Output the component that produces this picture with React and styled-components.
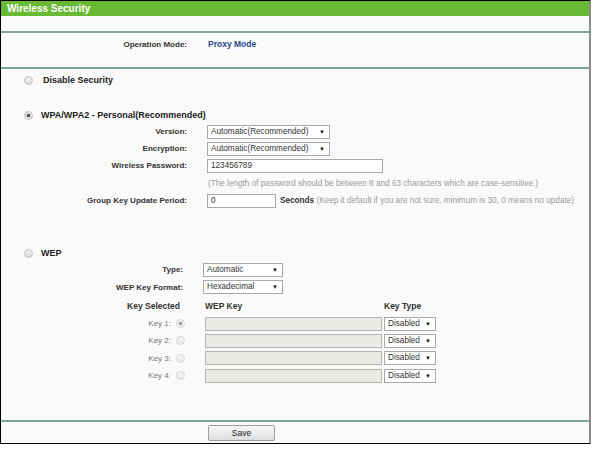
import styled, { createGlobalStyle } from "styled-components";

const GlobalStyle = createGlobalStyle`
  body {
    margin: 0;
    background: #fff;
    font-family: "Liberation Sans", Arial, sans-serif;
    color: #333;
  }
`;

const Frame = styled.div`
  width: 588px;
  border: 1px solid #000;
  border-right: 2px solid #8a8a8a;
  background: #fafafa;
`;

const Header = styled.div`
  height: 15px;
  line-height: 15px;
  padding-left: 6px;
  background: #68b934;
  color: #fff;
  font-size: 10px;
  font-weight: bold;
`;

const Spacer = styled.div`
  height: ${(p) => p.$h}px;
`;

const Divider = styled.div`
  height: 2px;
  background: #7ba690;
`;

const ModeRow = styled.div`
  height: 34px;
  padding-top: 3px;
  box-sizing: border-box;
  display: flex;
  align-items: flex-start;
  line-height: 17px;
`;

const ModeValue = styled.span`
  margin-left: 1px;
  color: #1f4a92;
  font-size: 8.5px;
  font-weight: bold;
`;

const Content = styled.div`
  display: flex;
  flex-direction: column;
  height: 351px;
`;

const RadioHeading = styled.label`
  display: flex;
  align-items: center;
  height: 16px;
  margin-top: ${(p) => p.$top || 0}px;
  padding-left: 23px;
  gap: ${(p) => p.$gap || 8}px;
  font-size: 9px;
  font-weight: bold;
  color: #222;
`;

const Radio = styled.input.attrs({ type: "radio" })`
  appearance: none;
  width: 9px;
  height: 9px;
  margin: 0;
  border-radius: 50%;
  border: 1px solid #bdbdbd;
  background: linear-gradient(#f4f4f4, #d9d9d9);
  box-sizing: border-box;
  flex-shrink: 0;
  &:checked {
    background: radial-gradient(circle, #555 0 1.5px, #e6e6e6 2.2px);
  }
  &:disabled {
    border-color: #d4d4d4;
    background: linear-gradient(#f8f8f8, #e8e8e8);
  }
  &:disabled:checked {
    background: radial-gradient(circle, #999 0 1.3px, #f0f0f0 2px);
  }
`;

const Row = styled.div`
  display: flex;
  align-items: center;
  height: ${(p) => p.$h || 17}px;
  flex-shrink: 0;
`;

const Label = styled.span`
  width: ${(p) => p.$w || 186}px;
  margin-right: ${(p) => p.$gap ?? 20}px;
  flex-shrink: 0;
  text-align: right;
  font-size: 8px;
  color: ${(p) => (p.$muted ? "#777" : "#333")};
  font-weight: ${(p) => (p.$muted ? "normal" : "bold")};
`;

const ColHead = styled.span`
  width: ${(p) => p.$w}px;
  margin-left: ${(p) => p.$left || 0}px;
  flex-shrink: 0;
  text-align: ${(p) => p.$align || "left"};
  font-size: 8.5px;
  font-weight: bold;
  color: #333;
`;

const SelectWrap = styled.span`
  position: relative;
  display: flex;
  width: ${(p) => p.$w}px;
  height: 14px;
  flex-shrink: 0;
  &::after {
    content: "▼";
    position: absolute;
    right: 5px;
    top: 0;
    line-height: 14px;
    font-size: 6px;
    color: #111;
    pointer-events: none;
  }
`;

const Select = styled.select`
  appearance: none;
  width: 100%;
  height: 14px;
  margin: 0;
  padding: 0 0 0 3px;
  box-sizing: border-box;
  border: 1px solid #a9a9a9;
  border-radius: 0;
  background: #fff;
  font: 8.2px/12px "Liberation Sans", Arial, sans-serif;
  color: #333;
  outline: none;
`;

const TextInput = styled.input`
  width: ${(p) => p.$w}px;
  height: 14px;
  margin: 0;
  padding: 0 0 0 3px;
  box-sizing: border-box;
  border: 1px solid #a9a9a9;
  background: #fff;
  font: 8.2px "Liberation Sans", Arial, sans-serif;
  color: #333;
  flex-shrink: 0;
  &:disabled {
    background: #ebebe6;
    border-color: #b3b3b3;
  }
`;

const Hint = styled.span`
  margin-left: ${(p) => p.$left || 0}px;
  font-size: 8.2px;
  color: #9a9a9a;
  white-space: nowrap;
  b {
    color: #333;
  }
`;

const Gap = styled.span`
  width: ${(p) => p.$w}px;
  flex-shrink: 0;
`;

const KeyRadio = styled(Radio)`
  margin: 0 20px 0 5px;
`;

const SaveRow = styled.div`
  display: flex;
  height: 21px;
  padding: 3px 0 0 207px;
  box-sizing: border-box;
`;

const SaveButton = styled.button`
  width: 67px;
  height: 16px;
  padding: 0;
  border: 1px solid #9c9c9c;
  border-radius: 2px;
  background: linear-gradient(#f7f7f7, #dedede);
  font: 8.5px "Liberation Sans", Arial, sans-serif;
  color: #222;
`;

const Dropdown = ({ w, value }) => (
  <SelectWrap $w={w}>
    <Select defaultValue={value}>
      <option>{value}</option>
    </Select>
  </SelectWrap>
);

const keys = [1, 2, 3, 4];

export default function App() {
  return (
    <>
      <GlobalStyle />
      <Frame>
        <Header>Wireless Security</Header>
        <Spacer $h={15} />
        <Divider />
        <ModeRow>
          <Label>Operation Mode:</Label>
          <ModeValue>Proxy Mode</ModeValue>
        </ModeRow>
        <Divider />
        <Content>
          <RadioHeading $top={3} $gap={10}>
            <Radio name="sec" />
            Disable Security
          </RadioHeading>

          <RadioHeading $top={19}>
            <Radio name="sec" defaultChecked />
            WPA/WPA2 - Personal(Recommended)
          </RadioHeading>
          <Row>
            <Label>Version:</Label>
            <Dropdown w={123} value="Automatic(Recommended)" />
          </Row>
          <Row>
            <Label>Encryption:</Label>
            <Dropdown w={123} value="Automatic(Recommended)" />
          </Row>
          <Row>
            <Label>Wireless Password:</Label>
            <TextInput $w={176} defaultValue="123456789" />
          </Row>
          <Row $h={18}>
            <Label />
            <Hint $left={1}>
              (The length of password should be between 8 and 63 characters which are
              case-sensitive.)
            </Hint>
          </Row>
          <Row>
            <Label>Group Key Update Period:</Label>
            <TextInput $w={69} defaultValue="0" />
            <Hint $left={4}>
              <b>Seconds</b> (Keep it default if you are not sure, minimum is 30, 0
              means no update)
            </Hint>
          </Row>

          <RadioHeading $top={36}>
            <Radio name="sec" />
            WEP
          </RadioHeading>
          <Row>
            <Label $w={182}>Type:</Label>
            <Dropdown w={80} value="Automatic" />
          </Row>
          <Row $h={18}>
            <Label $w={182}>WEP Key Format:</Label>
            <Dropdown w={80} value="Hexadecimal" />
          </Row>
          <Row $h={19}>
            <ColHead $w={179} $align="right">
              Key Selected
            </ColHead>
            <ColHead $w={179} $left={25}>
              WEP Key
            </ColHead>
            <ColHead $w={60}>Key Type</ColHead>
          </Row>
          {keys.map((k) => (
            <Row key={k} $h={k === 3 ? 18 : 17}>
              <Label $w={170} $gap={0} $muted>
                Key {k}:
              </Label>
              <KeyRadio name="key" defaultChecked={k === 1} disabled />
              <TextInput $w={177} disabled />
              <Gap $w={2} />
              <Dropdown w={52} value="Disabled" />
            </Row>
          ))}
        </Content>
        <Divider />
        <SaveRow>
          <SaveButton>Save</SaveButton>
        </SaveRow>
      </Frame>
    </>
  );
}
